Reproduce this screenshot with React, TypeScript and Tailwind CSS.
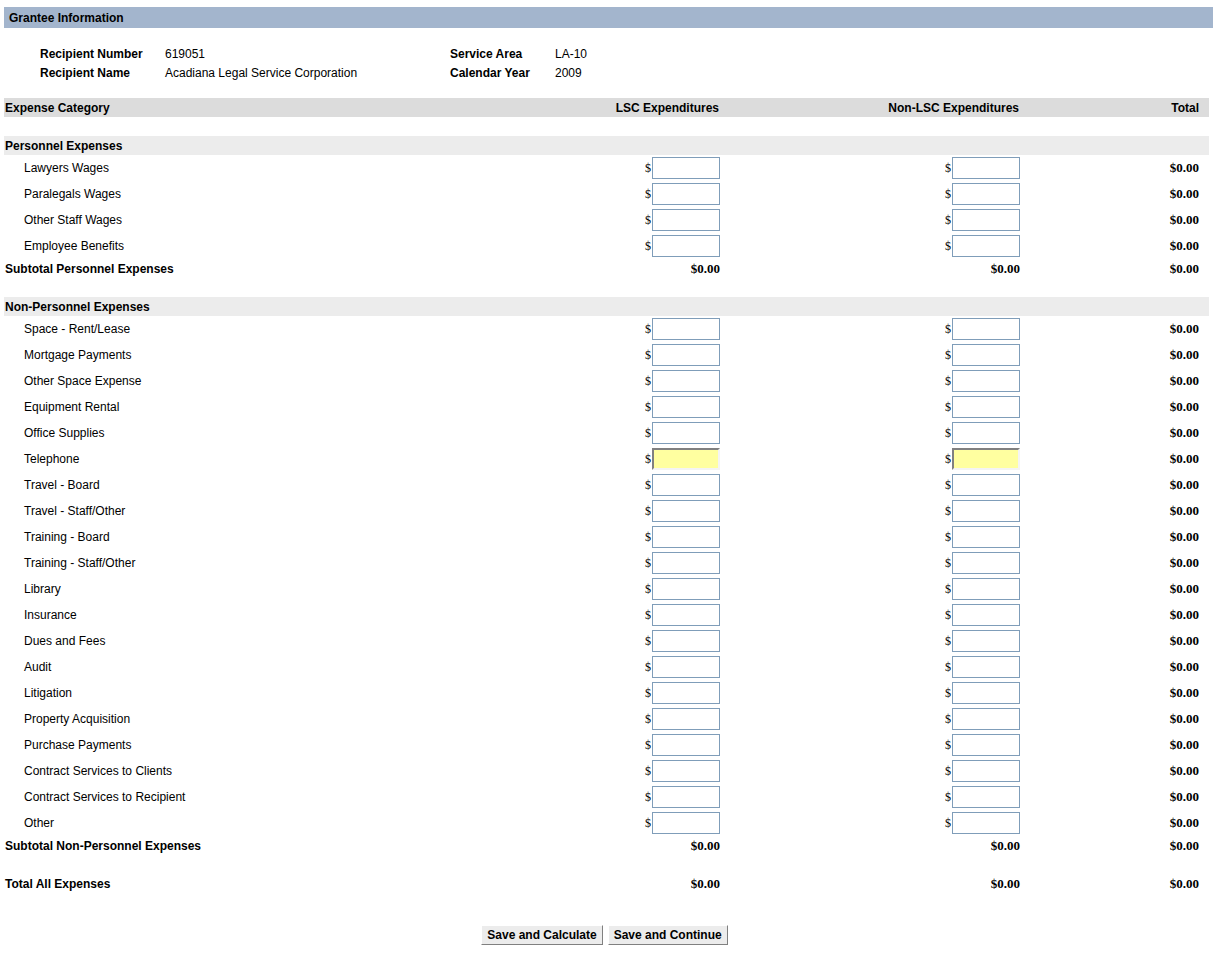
import React from 'react';

const personnel = ['Lawyers Wages', 'Paralegals Wages', 'Other Staff Wages', 'Employee Benefits'];

const nonPersonnel = [
  'Space - Rent/Lease',
  'Mortgage Payments',
  'Other Space Expense',
  'Equipment Rental',
  'Office Supplies',
  'Telephone',
  'Travel - Board',
  'Travel - Staff/Other',
  'Training - Board',
  'Training - Staff/Other',
  'Library',
  'Insurance',
  'Dues and Fees',
  'Audit',
  'Litigation',
  'Property Acquisition',
  'Purchase Payments',
  'Contract Services to Clients',
  'Contract Services to Recipient',
  'Other',
];

const rowGrid = 'grid grid-cols-[416px_300px_300px_189px] items-center';

const MoneyInput = ({ active }: { active?: boolean }) => (
  <div className="flex items-center justify-end">
    <span className="font-['Liberation_Serif',serif] text-[12px] leading-none mr-[1px]">$</span>
    <input
      type="text"
      className={
        active
          ? 'w-[68px] h-[22px] bg-[#ffffa0] border-2 border-t-[#808080] border-l-[#808080] border-r-[#f4f4f4] border-b-[#f4f4f4] outline-none'
          : 'w-[68px] h-[22px] bg-white border border-[#7f9db9] outline-none'
      }
    />
  </div>
);

const Amount = ({ className = '' }: { className?: string }) => (
  <div className={`text-right font-['Liberation_Serif',serif] font-bold text-[13px] ${className}`}>$0.00</div>
);

const LineRow = ({ label, active }: { label: string; active?: boolean }) => (
  <div className={`${rowGrid} h-[26px]`}>
    <div className="pl-[20px]">{label}</div>
    <MoneyInput active={active} />
    <MoneyInput active={active} />
    <Amount className="pr-[10px]" />
  </div>
);

const TotalRow = ({ label }: { label: string }) => (
  <div className={`${rowGrid} h-[19px]`}>
    <div className="pl-[1px] font-bold">{label}</div>
    <Amount />
    <Amount />
    <Amount className="pr-[10px]" />
  </div>
);

const SectionRow = ({ label }: { label: string }) => (
  <div className="h-[19px] bg-[#ececec] flex items-center pl-[1px] font-bold">{label}</div>
);

export default function App() {
  return (
    <div className="bg-white text-black font-['Liberation_Sans',Arial,sans-serif] text-[12px] min-h-[953px] pt-[7px]">
      <div className="ml-[4px] h-[21px] bg-[#a3b5cd] flex items-center pl-[5px] font-bold">Grantee Information</div>

      <div className="ml-[40px] mt-[16px] grid grid-cols-[125px_285px_105px_1fr] auto-rows-[19px] items-center">
        <div className="font-bold">Recipient Number</div>
        <div>619051</div>
        <div className="font-bold">Service Area</div>
        <div>LA-10</div>
        <div className="font-bold">Recipient Name</div>
        <div>Acadiana Legal Service Corporation</div>
        <div className="font-bold">Calendar Year</div>
        <div>2009</div>
      </div>

      <div className="ml-[4px] w-[1205px] mt-[16px]">
        <div className={`${rowGrid} h-[19px] bg-[#dcdcdc] font-bold`}>
          <div className="pl-[1px]">Expense Category</div>
          <div className="text-right pr-[1px]">LSC Expenditures</div>
          <div className="text-right pr-[1px]">Non-LSC Expenditures</div>
          <div className="text-right pr-[10px]">Total</div>
        </div>

        <div className="h-[19px]" />
        <SectionRow label="Personnel Expenses" />
        {personnel.map((p) => (
          <LineRow key={p} label={p} />
        ))}
        <TotalRow label="Subtotal Personnel Expenses" />

        <div className="h-[19px]" />
        <SectionRow label="Non-Personnel Expenses" />
        {nonPersonnel.map((p) => (
          <LineRow key={p} label={p} active={p === 'Telephone'} />
        ))}
        <TotalRow label="Subtotal Non-Personnel Expenses" />

        <div className="h-[19px]" />
        <TotalRow label="Total All Expenses" />
      </div>

      <div className="flex justify-center gap-[5px] mt-[32px] pr-[4px]">
        <button className="h-[20px] px-[5px] bg-[#ececec] border border-t-white border-l-white border-r-[#808080] border-b-[#808080] font-bold text-[12px]">
          Save and Calculate
        </button>
        <button className="h-[20px] px-[5px] bg-[#ececec] border border-t-white border-l-white border-r-[#808080] border-b-[#808080] font-bold text-[12px]">
          Save and Continue
        </button>
      </div>
    </div>
  );
}
